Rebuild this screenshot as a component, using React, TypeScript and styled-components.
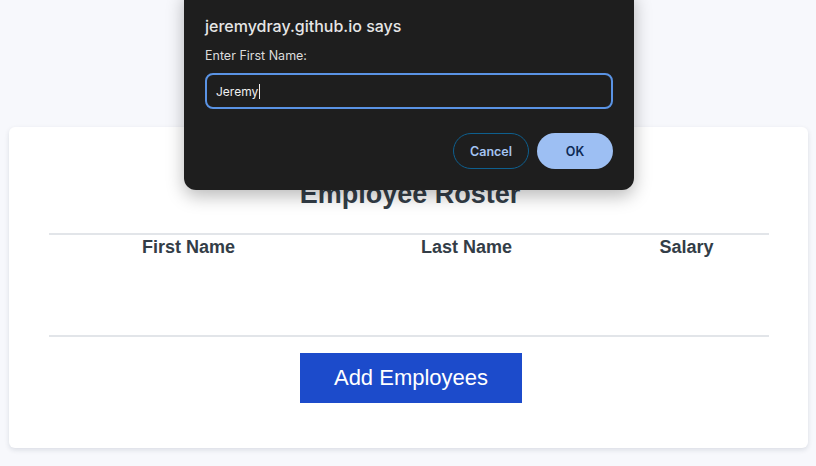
import React from 'react'
import styled, { createGlobalStyle } from 'styled-components'

//=> Global
const GlobalStyle = createGlobalStyle`
	* { box-sizing: border-box; }
	html, body {
		margin: 0;
		padding: 0;
		background: #f7f8fc;
		font-family: 'Liberation Sans', Arial, sans-serif;
	}
`

const columns = ['First Name', 'Last Name', 'Salary']

//=> DOM
export default () => {
	return (
		<>
			<GlobalStyle />
			<Page>
				<Card>
					<Title>Employee Roster</Title>
					<Table>
						<HeadRow>
							{columns.map((c) => (
								<HeadCell key={c}>{c}</HeadCell>
							))}
						</HeadRow>
						<Body />
					</Table>
					<Actions>
						<AddButton>Add Employees</AddButton>
					</Actions>
				</Card>
			</Page>
			<Dialog>
				<DialogTitle>jeremydray.github.io says</DialogTitle>
				<DialogLabel>Enter First Name:</DialogLabel>
				<PromptInput>
					Jeremy
					<Caret />
				</PromptInput>
				<DialogButtons>
					<CancelButton>Cancel</CancelButton>
					<OkButton>OK</OkButton>
				</DialogButtons>
			</Dialog>
		</>
	)
}

//=> Style
const Page = styled.main`
	width: 816px;
	height: 466px;
	padding: 127px 8px 0 9px;
`

const Card = styled.section`
	width: 799px;
	height: 321px;
	background: #fff;
	border-radius: 6px;
	box-shadow: rgba(20, 30, 60, 0.12) 0px 2px 5px;
	padding: 40px 40px 0;
	display: flex;
	flex-direction: column;
	align-items: center;
`

const Title = styled.h1`
	margin: 9px 0 0 3px;
	font-size: 27px;
	line-height: 36px;
	font-weight: 700;
	color: #333d47;
`

const Table = styled.div`
	width: 720px;
	margin-top: 21px;
	border-top: 2px solid #e2e5e9;
	border-bottom: 2px solid #e2e5e9;
`

const HeadRow = styled.div`
	display: grid;
	grid-template-columns: 280px 276px 164px;
	padding-top: 2px;
`

const HeadCell = styled.div`
	text-align: center;
	font-size: 18px;
	font-weight: 700;
	line-height: 20px;
	color: #333d47;
`

const Body = styled.div`
	height: 78px;
`

const Actions = styled.div`
	margin-top: 16px;
	padding-left: 5px;
	display: flex;
	justify-content: center;
`

const AddButton = styled.button`
	width: 222px;
	height: 50px;
	border: none;
	background: #1c4bcb;
	color: #fff;
	font-family: 'Liberation Sans', Arial, sans-serif;
	font-size: 22px;
	padding: 0;
`

const Dialog = styled.div`
	position: absolute;
	left: 184px;
	top: -12px;
	width: 450px;
	height: 202px;
	background: #1e1e1e;
	border-radius: 12px;
	box-shadow: rgba(0, 0, 0, 0.28) 0px 6px 18px;
	padding: 27px 21px 0;
	font-family: Inter, 'Noto Sans', sans-serif;
	color: #e6e6e6;
`

const DialogTitle = styled.div`
	font-size: 16px;
	font-weight: 500;
	line-height: 22px;
`

const DialogLabel = styled.div`
	margin-top: 11px;
	font-size: 12.5px;
	line-height: 16px;
	color: #dcdcdc;
`

const PromptInput = styled.div`
	margin-top: 9px;
	height: 36px;
	border: 2px solid #5a93e4;
	border-radius: 8px;
	padding: 0 9px;
	display: flex;
	align-items: center;
	font-size: 12px;
	color: #f0f0f0;
`

const Caret = styled.span`
	display: inline-block;
	width: 1px;
	height: 15px;
	background: #f0f0f0;
	margin-left: 1px;
`

const DialogButtons = styled.div`
	margin-top: 24px;
	display: flex;
	justify-content: flex-end;
	gap: 8px;
`

const CancelButton = styled.button`
	width: 76px;
	height: 36px;
	border-radius: 18px;
	border: 1px solid #0e5f8e;
	background: transparent;
	color: #a4c4f2;
	font-family: Inter, 'Noto Sans', sans-serif;
	font-size: 12.5px;
	font-weight: 600;
`

const OkButton = styled.button`
	width: 76px;
	height: 36px;
	border-radius: 18px;
	border: none;
	background: #9dbff3;
	color: #0d2a55;
	font-family: Inter, 'Noto Sans', sans-serif;
	font-size: 12.5px;
	font-weight: 600;
`
